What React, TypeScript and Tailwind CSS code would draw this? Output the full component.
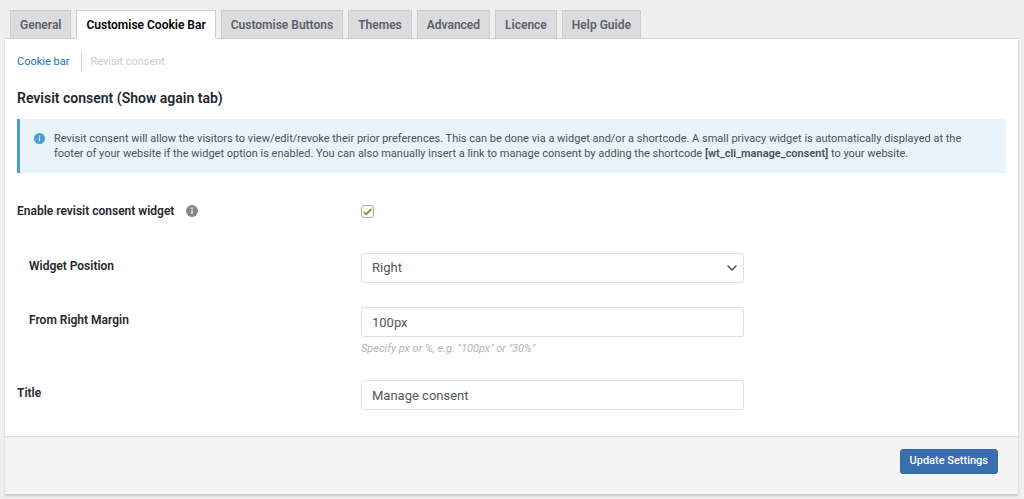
import React, { useState } from 'react';
import { ChevronDown } from 'lucide-react';

const tabs = [
  'General',
  'Customise Cookie Bar',
  'Customise Buttons',
  'Themes',
  'Advanced',
  'Licence',
  'Help Guide',
];

const inputClass =
  'block w-full h-[30px] px-2.5 text-[13px] text-[#50575e] bg-white border border-[#d9dfe4] rounded-[3px] focus:outline-none focus:border-[#2271b1]';

const InfoIcon: React.FC<{ className?: string }> = ({ className }) => (
  <svg viewBox="0 0 12 12" className={className} aria-hidden="true">
    <circle cx="6" cy="6" r="6" fill="currentColor" />
    <circle cx="6" cy="3.4" r="0.8" fill="#fff" />
    <path d="M5.1 5.2h1.5v3.9H5.4V6h-.3z" fill="#fff" />
  </svg>
);

interface RowProps {
  id: string;
  label: React.ReactNode;
  nested?: boolean;
  children: React.ReactNode;
}

const Row: React.FC<RowProps> = ({ id, label, nested, children }) => (
  <div className="grid grid-cols-[344px_minmax(0,383px)] items-start">
    <label
      htmlFor={id}
      className={`flex items-center gap-3 h-[26px] text-[12px] font-semibold text-[#23282d] ${nested ? 'pl-3' : ''}`}
    >
      {label}
    </label>
    <div>{children}</div>
  </div>
);

const App: React.FC = () => {
  const [activeTab, setActiveTab] = useState('Customise Cookie Bar');
  const [enabled, setEnabled] = useState(true);
  const [position, setPosition] = useState('Right');
  const [margin, setMargin] = useState('100px');
  const [title, setTitle] = useState('Manage consent');

  return (
    <div className="min-h-screen pt-2.5 pl-[5px] pr-1.5 pb-1 bg-[#efefef] font-[Roboto,sans-serif]">
      <nav className="flex gap-[5px] px-[5px] border-b border-[#d5d5d7]">
        {tabs.map((tab) => (
          <button
            key={tab}
            type="button"
            onClick={() => setActiveTab(tab)}
            className={`h-[29px] -mb-px px-[9px] text-[12px] font-semibold border whitespace-nowrap ${
              tab === activeTab
                ? 'bg-white text-black border-[#cfcfd1] border-b-white'
                : 'bg-[#dcdcde] text-[#5a6168] border-[#cdcdcf]'
            }`}
          >
            {tab}
          </button>
        ))}
      </nav>

      <form
        className="bg-white shadow-[0_2px_2px_rgba(0,0,0,0.18)]"
        onSubmit={(e) => e.preventDefault()}
      >
        <div className="px-3 pt-[13px] pb-[26px]">
          <div className="flex items-center h-5 text-[11px]">
            <a href="#cookie-bar" className="flex items-center h-5 pr-3 text-[#2271b1] border-r border-[#d8d8d8]">
              Cookie bar
            </a>
            <a href="#revisit-consent" className="pl-2 text-[#cccccc]">
              Revisit consent
            </a>
          </div>

          <h2 className="mt-4 text-[14px] leading-5 font-semibold text-[#23282d]">
            Revisit consent (Show again tab)
          </h2>

          <div className="flex mt-[11px] py-3 pl-3.5 pr-7 border-l-3 border-[#469fd1] bg-[#e8f3fa]">
            <InfoIcon className="w-[11px] h-[11px] mt-0.5 mr-[9px] shrink-0 text-[#469fd1]" />
            <p className="text-[11px] leading-[15px] text-[#4b5259]">
              Revisit consent will allow the visitors to view/edit/revoke their prior preferences. This can be
              done via a widget and/or a shortcode. A small privacy widget is automatically displayed at the
              footer of your website if the widget option is enabled. You can also manually insert a link to
              manage consent by adding the shortcode <b className="font-semibold">[wt_cli_manage_consent]</b> to
              your website.
            </p>
          </div>

          <div className="mt-[25px]">
            <Row
              id="enable-widget"
              label={
                <>
                  Enable revisit consent widget
                  <InfoIcon className="w-3 h-3 text-[#888888]" />
                </>
              }
            >
              <div className="flex items-center h-[26px]">
                <span className="relative flex">
                  <input
                    id="enable-widget"
                    type="checkbox"
                    checked={enabled}
                    onChange={(e) => setEnabled(e.target.checked)}
                    className="appearance-none w-[13px] h-[13px] bg-white border border-[#a7a9ac] rounded-[3px]"
                  />
                  {enabled && (
                    <svg viewBox="0 0 13 13" className="absolute inset-0 w-[13px] h-[13px] pointer-events-none">
                      <path d="M2.8 6.9l2.4 2.3L10.5 4" fill="none" stroke="#6aa436" strokeWidth="1.8" />
                    </svg>
                  )}
                </span>
              </div>
            </Row>
          </div>

          <div className="mt-[29px]">
            <Row id="widget-position" label="Widget Position" nested>
              <div className="relative">
                <select
                  id="widget-position"
                  value={position}
                  onChange={(e) => setPosition(e.target.value)}
                  className={`${inputClass} appearance-none`}
                >
                  <option>Right</option>
                  <option>Left</option>
                </select>
                <ChevronDown
                  className="absolute right-1 top-[7px] w-4 h-4 text-[#50575e] pointer-events-none"
                  strokeWidth={2.4}
                />
              </div>
            </Row>
          </div>

          <div className="mt-6">
            <Row id="right-margin" label="From Right Margin" nested>
              <input
                id="right-margin"
                type="text"
                value={margin}
                onChange={(e) => setMargin(e.target.value)}
                className={inputClass}
              />
              <p className="mt-1 text-[11px] leading-4 italic text-[#b4b4b4]">
                Specify px or %, e.g. "100px" or "30%"
              </p>
            </Row>
          </div>

          <div className="mt-[23px]">
            <Row id="title" label="Title">
              <input
                id="title"
                type="text"
                value={title}
                onChange={(e) => setTitle(e.target.value)}
                className={inputClass}
              />
            </Row>
          </div>
        </div>

        <div className="flex justify-end pt-3 pb-5 pr-5 bg-[#f4f4f4] border-t border-[#e2e2e2]">
          <button
            type="submit"
            className="h-[25px] px-[9px] text-[11px] font-medium text-white bg-[#3a6fae] border border-[#3568a6] rounded-[3px]"
          >
            Update Settings
          </button>
        </div>
      </form>
    </div>
  );
};

export default App;
